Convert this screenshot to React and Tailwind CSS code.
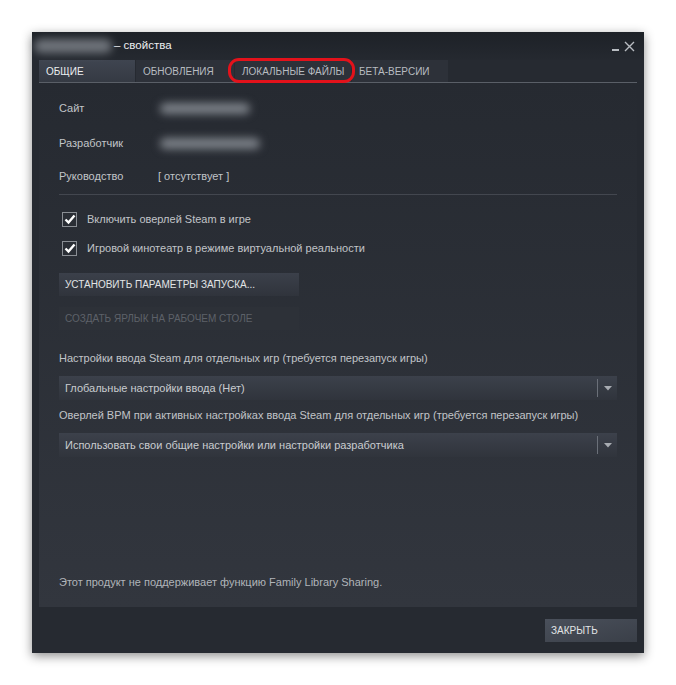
import React from 'react';

const font = { fontFamily: '"Liberation Sans", Arial, sans-serif' };

const Check = () => (
  <span className="w-[15px] h-[15px] border border-[#8a8e94] bg-[#2a2e35] flex items-center justify-center">
    <svg width="12" height="11" viewBox="0 0 12 11">
      <path d="M1.5 5.5 L4.5 8.5 L10.5 1.5" fill="none" stroke="#ffffff" strokeWidth="2.4" />
    </svg>
  </span>
);

const Select = ({ text }) => (
  <div className="h-[24px] flex items-center bg-gradient-to-b from-[#3c414b] to-[#30343c]">
    <span className="flex-1 pl-[6px] text-[11px] text-[#c9ccd0] whitespace-nowrap">{text}</span>
    <span className="w-px h-[18px] bg-[#6b7079]" />
    <span className="w-[19px] flex items-center justify-center">
      <svg width="8" height="5" viewBox="0 0 8 5">
        <path d="M0 0 H8 L4 4.5 Z" fill="#a8acb2" />
      </svg>
    </span>
  </div>
);

const tabs = [
  { label: 'ОБЩИЕ', w: 'w-[96px]', active: true },
  { label: 'ОБНОВЛЕНИЯ', w: 'w-[98px]' },
  { label: 'ЛОКАЛЬНЫЕ ФАЙЛЫ', w: 'w-[116px]' },
  { label: 'БЕТА-ВЕРСИИ', w: 'w-[96px]' },
];

export default function App() {
  return (
    <div className="w-[676px] h-[685px] bg-white pt-[32px] pl-[32px]" style={font}>
      <div className="relative w-[612px] h-[621px] bg-[#262a31] shadow-[0_3px_10px_rgba(0,0,0,0.45)] flex flex-col">
        {/* title bar */}
        <div className="h-[28px] flex items-center bg-gradient-to-b from-[#1d2127] to-[#252930]">
          <div className="ml-[2px] w-[78px] h-[14px] rounded-full bg-[#a4a9b0] blur-[4px] opacity-60" />
          <span className="ml-[2px] text-[11.5px] text-[#eceef0] whitespace-nowrap">– свойства</span>
          <div className="ml-auto mr-[9px] flex items-end gap-[5px]">
            <span className="w-[7px] h-[2px] bg-[#b8bcc1] mb-[1px]" />
            <svg width="11" height="11" viewBox="0 0 11 11">
              <path d="M1 1 L10 10 M10 1 L1 10" stroke="#b8bcc1" strokeWidth="1.4" />
            </svg>
          </div>
        </div>

        {/* tabs */}
        <div className="px-[7px] flex gap-px h-[22px]">
          {tabs.map((t) => (
            <div
              key={t.label}
              className={`${t.w} h-[22px] pl-[7px] flex items-center text-[10px] whitespace-nowrap ${
                t.active
                  ? 'bg-gradient-to-b from-[#3f4550] to-[#353a43] text-[#eceef0]'
                  : 'bg-[#2d3139] text-[#b8bcc1]'
              }`}
            >
              {t.label}
            </div>
          ))}
        </div>

        {/* panel */}
        <div className="mx-[7px] border-t border-[#5a5f67] h-[525px] bg-gradient-to-b from-[#262a31] to-[#32363e] px-[20px] pb-[17px] flex flex-col text-[11px] text-[#c1c4c8] whitespace-nowrap">
          <div className="mt-[17px] h-[16px] flex items-center">
            <span className="w-[101px]">Сайт</span>
            <div className="w-[90px] h-[11px] rounded-full bg-[#7c8188] blur-[4px]" />
          </div>
          <div className="mt-[19px] h-[16px] flex items-center">
            <span className="w-[101px]">Разработчик</span>
            <div className="w-[100px] h-[11px] rounded-full bg-[#7c8188] blur-[4px]" />
          </div>
          <div className="mt-[17px] h-[16px] flex items-center">
            <span className="w-[99px]">Руководство</span>
            <span>[ отсутствует ]</span>
          </div>
          <div className="mt-[10px] h-px bg-[#43474f]" />

          <div className="mt-[16px] h-[16px] flex items-center gap-[10px] pl-[3px]">
            <Check />
            <span>Включить оверлей Steam в игре</span>
          </div>
          <div className="mt-[13px] h-[16px] flex items-center gap-[10px] pl-[3px]">
            <Check />
            <span>Игровой кинотеатр в режиме виртуальной реальности</span>
          </div>

          <div className="mt-[17px] w-[240px] h-[23px] pl-[6px] flex items-center text-[10px] text-[#e2e4e6] bg-gradient-to-b from-[#3b404a] to-[#30343c]">
            УСТАНОВИТЬ ПАРАМЕТРЫ ЗАПУСКА...
          </div>
          <div className="mt-[11px] w-[240px] h-[23px] pl-[6px] flex items-center text-[10px] text-[#5d6169] bg-[#2d3138]">
            СОЗДАТЬ ЯРЛЫК НА РАБОЧЕМ СТОЛЕ
          </div>

          <div className="mt-[20px] h-[16px] flex items-center">
            Настройки ввода Steam для отдельных игр (требуется перезапуск игры)
          </div>
          <div className="mt-[10px]">
            <Select text="Глобальные настройки ввода (Нет)" />
          </div>
          <div className="mt-[7px] h-[16px] flex items-center">
            Оверлей BPM при активных настройках ввода Steam для отдельных игр (требуется перезапуск игры)
          </div>
          <div className="mt-[10px]">
            <Select text="Использовать свои общие настройки или настройки разработчика" />
          </div>

          <div className="mt-auto h-[16px] flex items-center text-[#b0b4b9]">
            Этот продукт не поддерживает функцию Family Library Sharing.
          </div>
        </div>

        {/* footer */}
        <div className="flex justify-end pr-[7px] pt-[12px]">
          <div className="w-[92px] h-[23px] pl-[6px] flex items-center text-[10px] text-[#e2e4e6] bg-gradient-to-br from-[#4a505b] to-[#3a3f48]">
            ЗАКРЫТЬ
          </div>
        </div>

        {/* red annotation */}
        <div className="absolute left-[196px] top-[26px] w-[127px] h-[25px] border-[3px] border-[#e3121b] rounded-[11px]" />
      </div>
    </div>
  );
}
